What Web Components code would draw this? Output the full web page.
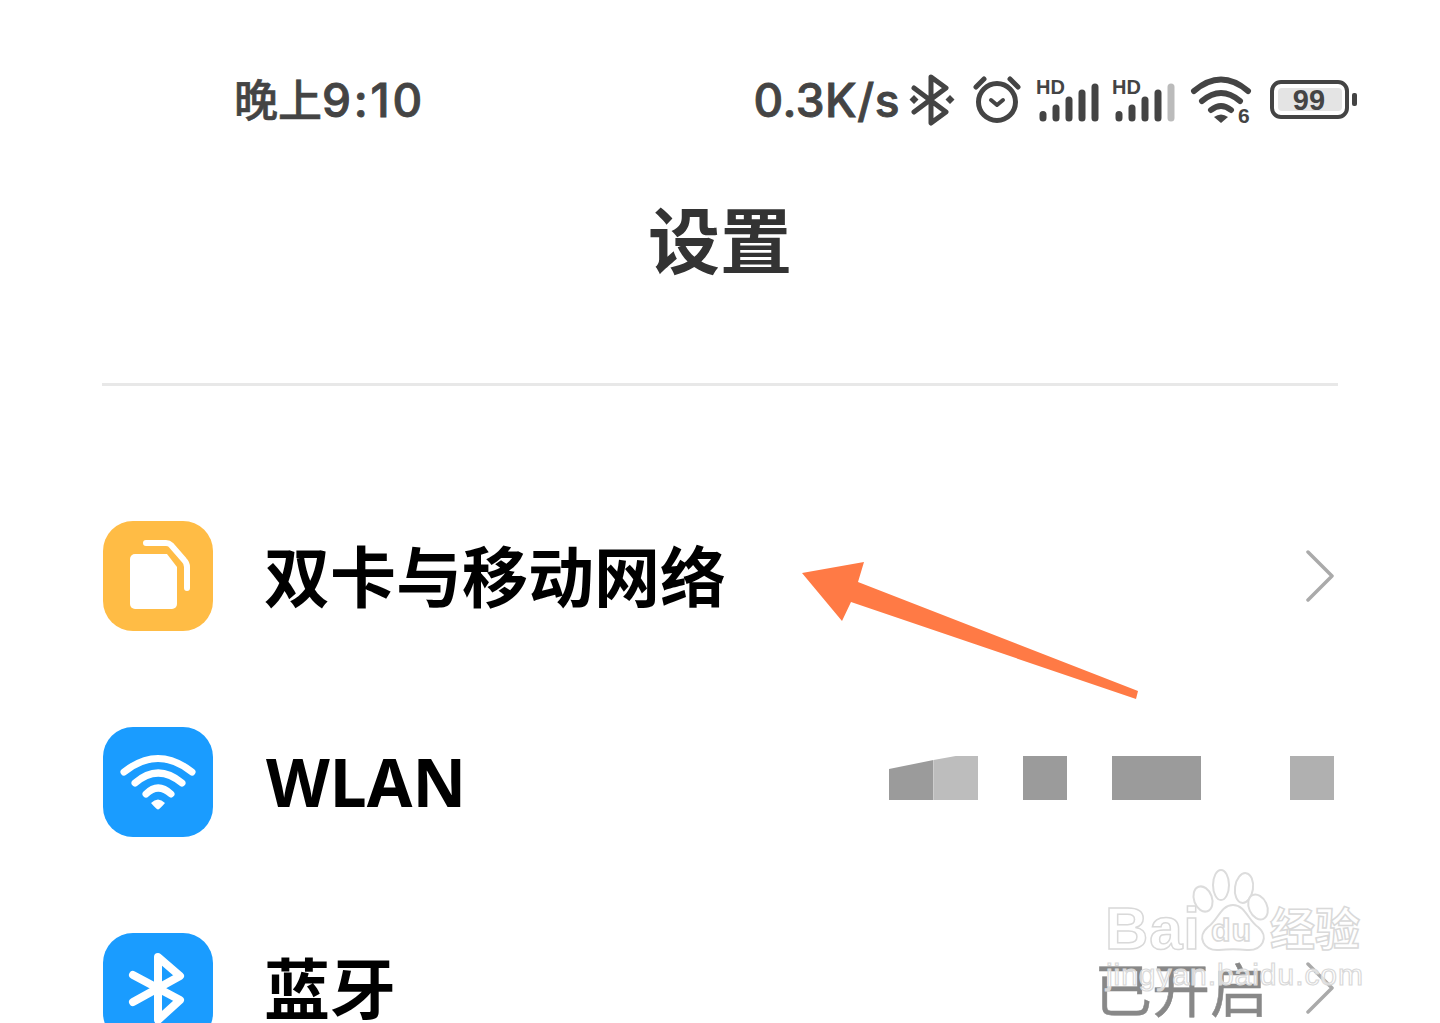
<!DOCTYPE html>
<html lang="zh-CN">
<head>
<meta charset="utf-8">
<title>设置</title>
<style>
html,body{margin:0;height:1023px;overflow:hidden;background:#fff}
body{font-family:"Noto Sans CJK SC","Noto Sans",sans-serif}
svg{display:block}
</style>
</head>
<body>
<settings-page>
  <status-bar></status-bar>
  <page-title>设置</page-title>
  <setting-row>
    <svg slot="icon" viewBox="0 0 110 110" width="110" height="110">
      <rect width="110" height="110" rx="30" fill="#ffbc45"/>
      <path d="M32 33H64L74 46V83a5 5 0 0 1-5 5H32a5 5 0 0 1-5-5V38a5 5 0 0 1 5-5Z" fill="#fff"/>
      <path d="M43 22H63Q66 22 68 24L81 39Q84 42 84 46V67" fill="none" stroke="#fff" stroke-width="6" stroke-linecap="round"/>
    </svg>
    双卡与移动网络
    <row-chevron slot="trailing"></row-chevron>
  </setting-row>
  <setting-row>
    <svg slot="icon" viewBox="0 0 110 110" width="110" height="110">
      <rect width="110" height="110" rx="30" fill="#1a9cff"/>
      <g fill="none" stroke="#fff" stroke-width="7" stroke-linecap="round">
        <path d="M21 45Q55 18 89 45"/>
        <path d="M32 56Q55 36 79 56"/>
        <path d="M43 67Q55 55 68 67"/>
      </g>
      <path d="M48 76Q55 69 62 76Q55 84 55 82Q55 84 48 76Z" fill="#fff"/>
    </svg>
    <span style="font-family:'Noto Sans','Noto Sans CJK SC',sans-serif;margin-left:2px">WLAN</span>
    <mosaic-block slot="trailing"></mosaic-block>
  </setting-row>
  <setting-row>
    <svg slot="icon" viewBox="0 0 110 110" width="110" height="110">
      <rect width="110" height="110" rx="30" fill="#1a9cff"/>
      <path d="M30 42L77 67L55 87V24L77 43L30 69" fill="none" stroke="#fff" stroke-width="8" stroke-linecap="round" stroke-linejoin="round"/>
    </svg>
    蓝牙
    <span slot="trailing" style="font-size:58px;font-weight:400;color:#888;line-height:1;margin-right:38px;padding-bottom:2px;-webkit-text-stroke:.5px #888">已开启</span>
    <row-chevron slot="trailing"></row-chevron>
  </setting-row>
  <orange-arrow></orange-arrow>
  <baidu-mark></baidu-mark>
</settings-page>

<script>
/* Shell for the whole phone screen. */
class SettingsPage extends HTMLElement {
  connectedCallback() {
    const root = this.attachShadow({ mode: 'open' });
    root.innerHTML = `<style>
:host{display:flex;flex-direction:column;position:relative;width:1440px;height:1023px;overflow:hidden;background:#fff}
</style>
<slot></slot>`;
  }
}

/* Status bar: time on the left, network + system icons on the right. */
class StatusBar extends HTMLElement {
  connectedCallback() {
    const root = this.attachShadow({ mode: 'open' });
    root.innerHTML = `<style>
:host{display:flex;align-items:center;height:52px;padding:74px 83px 0 234px;color:#444}
.time{font:500 44px/52px "Noto Sans CJK SC",sans-serif;-webkit-text-stroke:.6px #444;margin-top:-2px}
.time b{font:500 46px/52px Inter,sans-serif;-webkit-text-stroke:.9px #444;letter-spacing:2.800px}
.speed{font:500 46px/52px Inter,"Noto Sans",sans-serif;-webkit-text-stroke:.9px #444;letter-spacing:.5px;margin-left:auto;margin-right:9px}
svg{display:block;flex:none;overflow:visible}
text{font-family:"Liberation Sans",sans-serif;font-weight:700;fill:#444}
</style>
<span class="time">晚上<b>9:10</b></span>
<span class="speed">0.3K/s</span>
<svg width="46" height="52" viewBox="0 0 46 52" style="margin-right:18px">
  <path d="M5 14L37 38L22 49V3L37 14L5 38" fill="none" stroke="#444" stroke-width="5" stroke-linecap="round" stroke-linejoin="round"/>
  <path d="M4 21l4.500 4.500L4 30l-4.500-4.500ZM40 21l4.500 4.500L40 30l-4.500-4.500Z" fill="#444" transform="translate(1 0)"/>
</svg>
<svg width="50" height="52" viewBox="0 0 50 52" style="margin-right:13px">
  <circle cx="24" cy="28" r="18.500" fill="none" stroke="#444" stroke-width="5"/>
  <path d="M3 13L11 5M45 13L37 5" stroke="#444" stroke-width="5" stroke-linecap="round"/>
  <path d="M18 26L24 31L30 26" fill="none" stroke="#444" stroke-width="4" stroke-linecap="round" stroke-linejoin="round"/>
</svg>
<svg width="64" height="46" viewBox="0 0 64 46" style="margin-right:12px">
  <text x="0" y="17" font-size="20" textLength="29">HD</text>
  <g fill="none" stroke="#444" stroke-width="7" stroke-linecap="round">
    <path d="M7 37.500V41M20 31V41M33 23V41M46 16V41M59 10V41"/>
  </g>
</svg>
<svg width="64" height="46" viewBox="0 0 64 46" style="margin-right:15px">
  <text x="0" y="17" font-size="20" textLength="29">HD</text>
  <g fill="none" stroke="#444" stroke-width="7" stroke-linecap="round">
    <path d="M7 37.500V41M20 31V41M33 23V41M46 16V41"/>
    <path d="M59 10V41" stroke="#bbb"/>
  </g>
</svg>
<svg width="60" height="50" viewBox="0 0 60 50" style="margin-right:19px">
  <g fill="none" stroke="#444" stroke-width="6" stroke-linecap="round">
    <path d="M3 16Q30 -7 57 16"/>
    <path d="M11 26Q30 10 49 26"/>
    <path d="M20 35Q30 27 40 35"/>
  </g>
  <path d="M23 42Q30 37 37 42L30 48Z" fill="#444"/>
  <text x="47" y="48" font-size="21">6</text>
</svg>
<svg width="87" height="42" viewBox="0 0 87 42">
  <rect x="2" y="3" width="75" height="35" rx="9" fill="none" stroke="#444" stroke-width="4"/>
  <rect x="8" y="9" width="64" height="23" rx="4" fill="#e4e4e4"/>
  <rect x="82" y="14" width="5" height="13" rx="2" fill="#444"/>
  <text x="39" y="31" font-size="29" text-anchor="middle">99</text>
</svg>`;
  }
}

class PageTitle extends HTMLElement {
  connectedCallback() {
    const root = this.attachShadow({ mode: 'open' });
    root.innerHTML = `<style>
:host{display:block;text-align:center;color:#333;font:700 72px/80px "Noto Sans CJK SC",sans-serif;padding:71px 0 106px;margin:0 102px;border-bottom:3px solid #e8e8e8}
</style><slot></slot>`;
  }
}

/* One settings entry: app icon, label, and whatever trails on the right. */
class SettingRow extends HTMLElement {
  connectedCallback() {
    const root = this.attachShadow({ mode: 'open' });
    root.innerHTML = `<style>
:host{display:flex;align-items:center;height:110px;flex:none;margin:0 106px 96px 103px;color:#000;font:700 66px/1 "Noto Sans CJK SC","Noto Sans",sans-serif}
:host(:first-of-type){margin-top:135px}
.label{flex:1;padding:0 0 6px 51px;white-space:nowrap}
.trail{display:flex;align-items:center}
</style>
<slot name="icon"></slot>
<div class="label"><slot></slot></div>
<div class="trail"><slot name="trailing"></slot></div>`;
  }
}

class RowChevron extends HTMLElement {
  connectedCallback() {
    const root = this.attachShadow({ mode: 'open' });
    root.innerHTML = `<style>:host{display:block;flex:none}svg{display:block}</style>
<svg width="28" height="52" viewBox="0 0 28 52"><path d="M2 2L26 26L2 50" fill="none" stroke="#aaa" stroke-width="3.500" stroke-linecap="round" stroke-linejoin="round"/></svg>`;
  }
}

/* Pixelated blur hiding the network name: cells on a 44.5px grid. */
class MosaicBlock extends HTMLElement {
  connectedCallback() {
    const root = this.attachShadow({ mode: 'open' });
    root.innerHTML = `<style>
:host{display:grid;grid-template-columns:repeat(10,44.5px);grid-template-rows:44px;margin-bottom:8px}
.a{background:#9b9b9b}
.b{background:#bdbdbd}
.c{background:#b0b0b0}
.s1{clip-path:polygon(0 13px,100% 4px,100% 100%,0 100%)}
.s2{clip-path:polygon(0 4px,50% 0,100% 0,100% 100%,0 100%)}
</style>
<i class="a s1"></i><i class="b s2"></i><i></i>
<i class="a"></i><i></i>
<i class="a" style="grid-column:span 2"></i><i></i><i></i>
<i class="c"></i>`;
  }
}

/* Annotation drawn on top of the screenshot. */
class OrangeArrow extends HTMLElement {
  connectedCallback() {
    const root = this.attachShadow({ mode: 'open' });
    root.innerHTML = `<style>:host{position:absolute;left:0;top:0;pointer-events:none}svg{display:block}</style>
<svg width="1440" height="1023" viewBox="0 0 1440 1023"><polygon points="802,573 864,562 858,582 1138,691 1136,699 851,602 842,621" fill="#ff7a45"/></svg>`;
  }
}

/* Baidu Jingyan watermark, bottom right, lies over the last row. */
class BaiduMark extends HTMLElement {
  connectedCallback() {
    const root = this.attachShadow({ mode: 'open' });
    root.innerHTML = `<style>
:host{position:absolute;left:0;top:0;pointer-events:none}
svg{display:block}
text{fill:rgba(255,255,255,.7);stroke:#d9d9d9;stroke-width:1.500}
.en{font-family:"Liberation Sans",sans-serif;font-weight:700}
.cn{font-family:"Noto Sans CJK SC",sans-serif;font-weight:700}
.url{font-family:"Liberation Sans",sans-serif;font-weight:400;stroke-width:1.200}
ellipse,.paw{fill:rgba(255,255,255,.6);stroke:#dcdcdc;stroke-width:2}
</style>
<svg width="1440" height="1023" viewBox="0 0 1440 1023">
  <text class="en" x="1105" y="949" font-size="60" textLength="95">Bai</text>
  <ellipse cx="1203" cy="899" rx="9" ry="13" transform="rotate(-20 1203 899)"/>
  <ellipse cx="1221" cy="885" rx="8" ry="15"/>
  <ellipse cx="1244" cy="888" rx="9" ry="15" transform="rotate(8 1244 888)"/>
  <ellipse cx="1258" cy="907" rx="9" ry="13" transform="rotate(-25 1258 907)"/>
  <path class="paw" d="M1233 905C1245 905 1248 920 1258 927C1270 937 1262 951 1247 950C1238 949 1228 949 1219 950C1204 951 1196 937 1208 927C1218 920 1221 905 1233 905Z"/>
  <text class="en" x="1211" y="941" font-size="32" textLength="40">du</text>
  <text class="cn" x="1270" y="946" font-size="45" textLength="90">经验</text>
  <text class="url" x="1106" y="985" font-size="30" textLength="257">jingyan.baidu.com</text>
</svg>`;
  }
}

customElements.define('settings-page', SettingsPage);
customElements.define('status-bar', StatusBar);
customElements.define('page-title', PageTitle);
customElements.define('setting-row', SettingRow);
customElements.define('row-chevron', RowChevron);
customElements.define('mosaic-block', MosaicBlock);
customElements.define('orange-arrow', OrangeArrow);
customElements.define('baidu-mark', BaiduMark);
</script>
</body>
</html>
